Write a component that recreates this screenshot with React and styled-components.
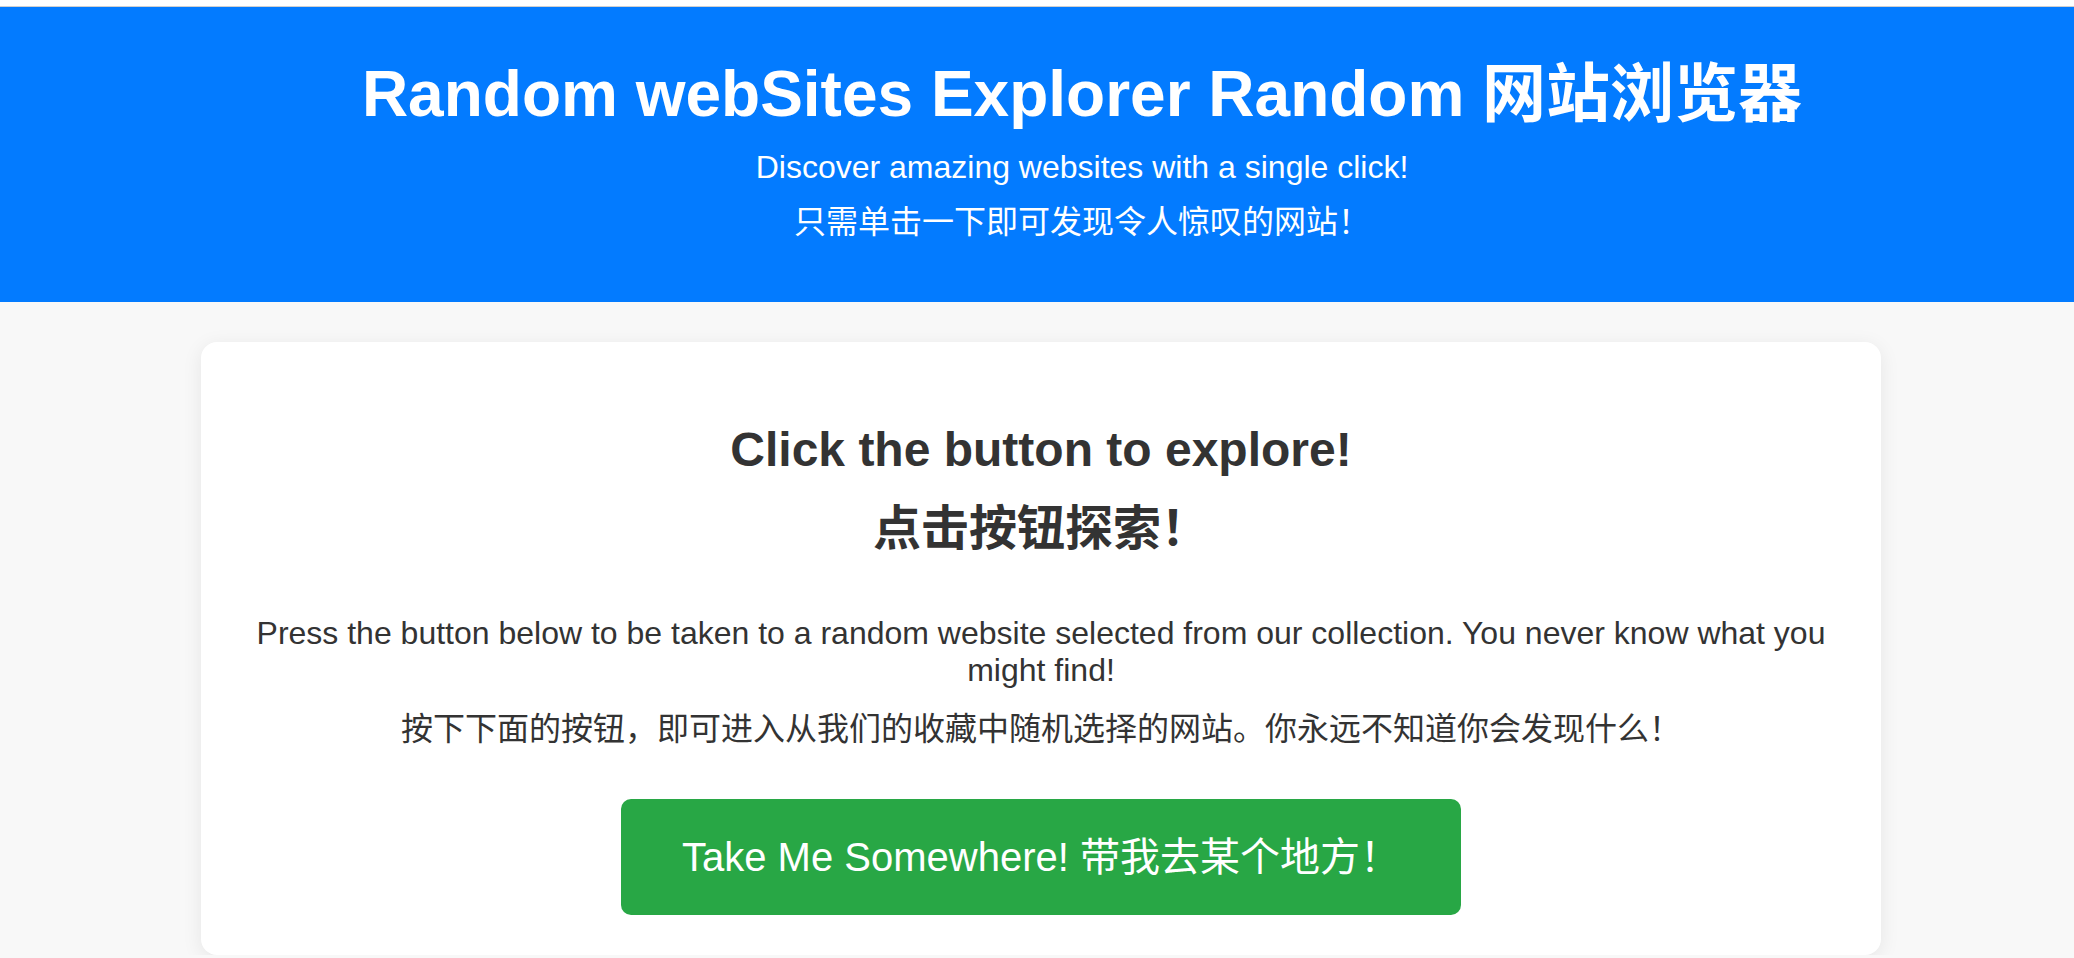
import * as React from "react";
import styled, { createGlobalStyle } from "styled-components";

const GlobalStyle = createGlobalStyle`
  html,
  body {
    margin: 0;
    padding: 0;
    background: #f8f8f8;
    font-family: "Liberation Sans", "Noto Sans CJK SC", sans-serif;
    color: #333;
  }
`;

const TopEdge = styled.div`
  height: 6px;
  background: #fff;
  border-bottom: 1px solid #cfcfcf;
`;

const Header = styled.header`
  background: #037bff;
  color: #fff;
  text-align: center;
  height: 295px;
  box-sizing: border-box;
  padding: 50px 0 0 90px;
`;

const Title = styled.h1`
  margin: 0;
  font-size: 64px;
  font-weight: 700;
  line-height: 74px;
`;

const Tagline = styled.p`
  margin: ${(props) => props.$gap}px 0 0;
  font-size: 32px;
  line-height: 40px;
`;

const Main = styled.main`
  display: flex;
  justify-content: center;
  padding: 40px 0 0 8px;
`;

const Card = styled.section`
  width: 1680px;
  box-sizing: border-box;
  padding: 40px;
  background: #fff;
  border-radius: 16px;
  box-shadow: 0 4px 20px rgba(0, 0, 0, 0.08);
  text-align: center;
`;

const Heading = styled.h2`
  margin: 28px 0 47px;
  font-size: 48px;
  font-weight: 700;
  line-height: 79px;

  span {
    display: block;
  }
`;

const Text = styled.p`
  margin: ${(props) => props.$gap}px 0 0;
  font-size: 32px;
  line-height: 36.8px;
`;

const ButtonRow = styled.div`
  display: flex;
  justify-content: center;
  margin-top: 52px;
`;

const ExploreButton = styled.button`
  font-family: inherit;
  font-size: 40px;
  line-height: 56px;
  padding: 30px 61px;
  color: #fff;
  background: #28a745;
  border: none;
  border-radius: 10px;
  cursor: pointer;
`;

const App = () => {
  return (
    <>
      <GlobalStyle />
      <TopEdge />
      <Header>
        <Title>Random webSites Explorer Random 网站浏览器</Title>
        <Tagline $gap={16}>Discover amazing websites with a single click!</Tagline>
        <Tagline $gap={15}>只需单击一下即可发现令人惊叹的网站！</Tagline>
      </Header>
      <Main>
        <Card>
          <Heading>
            <span>Click the button to explore!</span>
            <span>点击按钮探索！</span>
          </Heading>
          <Text $gap={0}>
            Press the button below to be taken to a random website selected
            from our collection. You never know what you might find!
          </Text>
          <Text $gap={22}>
            按下下面的按钮，即可进入从我们的收藏中随机选择的网站。你永远不知道你会发现什么！
          </Text>
          <ButtonRow>
            <ExploreButton type="button">
              Take Me Somewhere! 带我去某个地方！
            </ExploreButton>
          </ButtonRow>
        </Card>
      </Main>
    </>
  );
};

export default App;
